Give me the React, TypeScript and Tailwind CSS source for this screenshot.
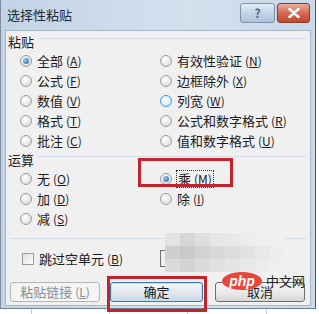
import type { ReactNode } from "react";

type RadioState = "off" | "on" | "hover";

function Radio({ state }: { state: RadioState }) {
  const ring =
    state === "hover"
      ? "border-[#3c9ad8] bg-[radial-gradient(circle_at_40%_35%,#ffffff,#bfe3f7)]"
      : "border-[#9a9c9e] bg-[radial-gradient(circle_at_40%_35%,#ffffff,#d2d4d6)]";
  return (
    <span
      className={`w-[12px] h-[12px] rounded-full border shrink-0 flex items-center justify-center ${ring}`}
    >
      {state === "on" && (
        <span className="w-[6px] h-[6px] rounded-full bg-[radial-gradient(circle_at_35%_35%,#8fd0f5,#1c5f9c)]" />
      )}
    </span>
  );
}

function Key({ k }: { k: string }) {
  return (
    <span className="ml-[3px] text-[12px]">
      (<span className="underline">{k}</span>)
    </span>
  );
}

function Option({
  label,
  k,
  state = "off",
  focus = false,
}: {
  label: string;
  k: string;
  state?: RadioState;
  focus?: boolean;
}) {
  return (
    <div className="h-[20px] flex items-center gap-[5px]">
      <Radio state={state} />
      <span
        className={`flex items-center leading-[16px] ${
          focus ? "outline outline-1 outline-dotted outline-[#333] px-[1px]" : ""
        }`}
      >
        {label}
        <Key k={k} />
      </span>
    </div>
  );
}

function Group({ title, h }: { title: string; h: string }) {
  return (
    <div className={`${h} flex items-center pl-[2px] gap-[4px]`}>
      <span>{title}</span>
      <span className="flex-1 border-t border-[#d5dde6] -translate-y-[4px] mr-[4px]" />
    </div>
  );
}

function Button({
  children,
  w,
  variant,
}: {
  children: ReactNode;
  w: string;
  variant: "disabled" | "default" | "normal";
}) {
  const styles = {
    disabled: "border-[#b5b5b5] bg-[#f4f4f4] text-[#8d8d8d]",
    default:
      "border-[#3d7bad] bg-[linear-gradient(#f6f8fa,#e4e9ee_50%,#cdd6de)] shadow-[inset_0_0_0_1px_#b8e2f8]",
    normal:
      "border-[#707070] bg-[linear-gradient(#f2f2f2,#ebebeb_50%,#d6d6d6)]",
  }[variant];
  return (
    <div
      className={`${w} h-[20px] rounded-[3px] border flex items-center justify-center ${styles}`}
    >
      {children}
    </div>
  );
}

const mosaic = [
  ["#e3e3e3", "#d6d6d6", "#dedede", "#e6e6e6", "#e9e9e9", "#ececec", "#efefef", "#f0f0f0"],
  ["#cfcfcf", "#c9c9c9", "#d2d2d2", "#d8d8d8", "#dcdcdc", "#e2e2e2", "#e8e8e8", "#ededed"],
  ["#dadada", "#d4d4d4", "#dadada", "#e0e0e0", "#e4e4e4", "#e8e8e8", "#ececec", "#efefef"],
];

export default function App() {
  return (
    <div className="relative w-[319px] h-[314px] bg-white overflow-hidden font-['Noto_Sans_CJK_SC',sans-serif] text-[13px] text-[#1b1b1b]">
      <div className="w-[316px] h-[309px] flex flex-col bg-[linear-gradient(90deg,#c3d4e7,#d3e0ee_60%,#c9d9ea)] border-r border-[#4a5560] border-l border-l-[#7f8f9f] border-b border-b-[#6f7f8f]">
        {/* title bar */}
        <div className="h-[30px] flex items-center pl-[6px] pr-[5px] shrink-0">
          <span className="text-[13px] text-[#1e2a36]">选择性粘贴</span>
          <div className="ml-auto flex gap-[2px] -mt-[4px]">
            <div className="w-[35px] h-[20px] rounded-[3px] border border-[#7d93ab] bg-[linear-gradient(#e3ecf5,#c3d4e6_50%,#aec3da)] flex items-center justify-center text-[12px] font-bold text-[#4a6785]">
              ?
            </div>
            <div className="w-[33px] h-[20px] rounded-[3px] border border-[#8a3a2e] bg-[linear-gradient(#eab0a0,#d56a52_50%,#c04a30)] flex items-center justify-center">
              <svg width="12" height="10" viewBox="0 0 12 10">
                <path
                  d="M1.5 1 L10.5 9 M10.5 1 L1.5 9"
                  stroke="#fff"
                  strokeWidth="2.6"
                  strokeLinecap="round"
                />
              </svg>
            </div>
          </div>
        </div>

        {/* body */}
        <div className="flex-1 mx-[4px] mb-[2px] bg-[#f0f0f0] border border-[#a9b6c4] flex flex-col pt-[2px]">
          <Group title="粘贴" h="h-[18px]" />
          <div className="flex pl-[14px]">
            <div className="w-[140px] flex flex-col">
              <Option label="全部" k="A" state="on" />
              <Option label="公式" k="F" />
              <Option label="数值" k="V" />
              <Option label="格式" k="T" />
              <Option label="批注" k="C" />
            </div>
            <div className="flex flex-col">
              <Option label="有效性验证" k="N" />
              <Option label="边框除外" k="X" />
              <Option label="列宽" k="W" state="hover" />
              <Option label="公式和数字格式" k="R" />
              <Option label="值和数字格式" k="U" />
            </div>
          </div>
          <Group title="运算" h="h-[18px]" />
          <div className="flex pl-[14px]">
            <div className="w-[140px] flex flex-col">
              <Option label="无" k="O" />
              <Option label="加" k="D" />
              <Option label="减" k="S" />
            </div>
            <div className="flex flex-col">
              <Option label="乘" k="M" state="on" focus />
              <Option label="除" k="I" />
            </div>
          </div>
          <div className="mt-[9px] mx-[4px] border-t border-[#d5dde6]" />
          <div className="h-[20px] mt-[10px] pl-[16px] flex items-center gap-[5px]">
            <span className="w-[12px] h-[12px] border border-[#9a9c9e] bg-[linear-gradient(135deg,#dcdcdc,#ffffff)]" />
            <span className="flex items-center">
              跳过空单元
              <Key k="B" />
            </span>
          </div>
          <div className="mt-[13px] pl-[4px] flex">
            <Button w="w-[90px]" variant="disabled">
              粘贴链接
              <Key k="L" />
            </Button>
            <div className="ml-[10px]">
              <Button w="w-[93px]" variant="default">
                确定
              </Button>
            </div>
            <div className="ml-[12px]">
              <Button w="w-[90px]" variant="normal">
                取消
              </Button>
            </div>
          </div>
        </div>
      </div>

      {/* spreadsheet grid behind the dialog */}
      <div className="flex h-[5px]">
        <div className="w-[32px] border-r border-[#c8c8c8]" />
        <div className="w-[78px] border-r border-[#c8c8c8]" />
        <div className="w-[78px] border-r border-[#c8c8c8]" />
        <div className="w-[79px] border-r border-[#c8c8c8]" />
      </div>

      {/* red highlight boxes */}
      <div className="absolute left-[138px] top-[158px] w-[95px] h-[29px] border-[3px] border-[#c3242c]" />
      <div className="absolute left-[107px] top-[276px] w-[100px] h-[36px] border-[3px] border-[#c3242c]" />

      {/* blurred mosaic */}
      <div className="absolute left-[160px] top-[250px] w-[5px] h-[17px] border border-r-0 border-[#707070]" />
      <div className="absolute left-[165px] top-[233px] grid grid-cols-8">
        {mosaic.flat().map((c, i) => (
          <div key={i} className="w-[15px] h-[13px]" style={{ backgroundColor: c }} />
        ))}
      </div>

      {/* watermark */}
      <div className="absolute left-[222px] top-[271px] flex items-center gap-[4px]">
        <div className="w-[40px] h-[18px] rounded-[50%] bg-[#e8463c] flex items-center justify-center text-white italic font-bold text-[14px] font-['Liberation_Sans',sans-serif] leading-none">
          php
        </div>
        <span className="text-[13px] text-[#222]">中文网</span>
      </div>
    </div>
  );
}
